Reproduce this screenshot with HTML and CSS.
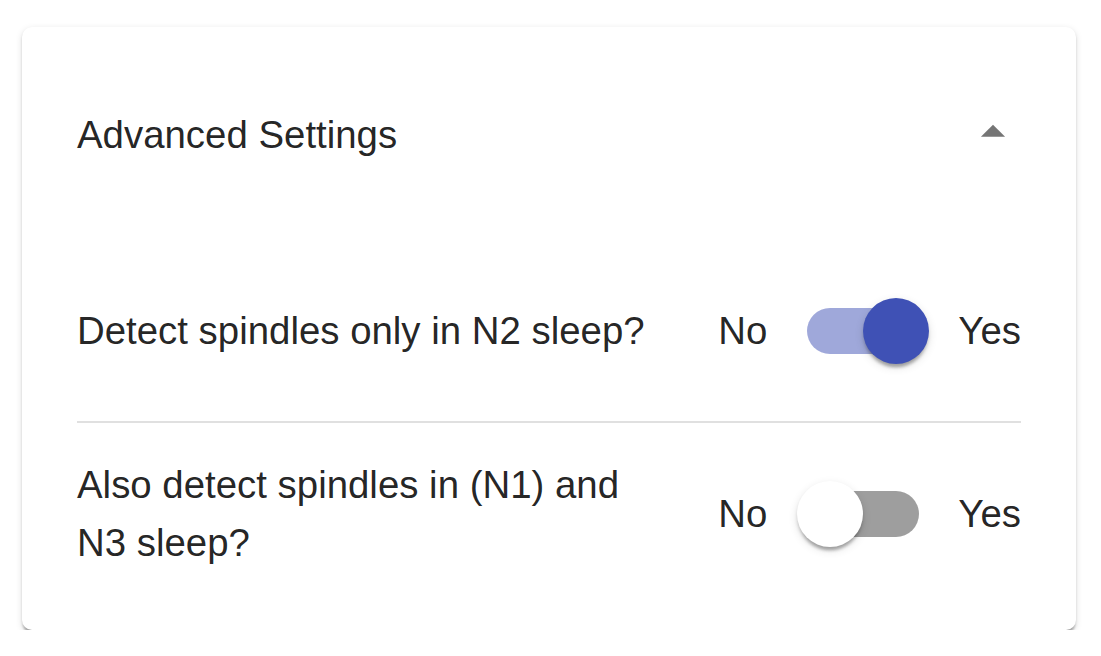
FILE: index.html
```html
<!DOCTYPE html>
<html lang="en">
<head>
    <meta charset="UTF-8">
    <meta name="viewport" content="width=device-width, initial-scale=1.0">
    <title>Advanced Settings</title>
    <link rel="stylesheet" href="styles.css">
</head>
<body>
    <div class="card">
        <div class="summary">
            <span class="summary-title">Advanced Settings</span>
            <svg class="expand-icon" viewBox="0 0 24 24" width="58" height="58">
                <path d="M7 14l5-5 5 5z"></path>
            </svg>
        </div>

        <div class="details">
            <div class="setting-row">
                <div class="setting-label">Detect spindles only in N2 sleep?</div>
                <div class="switch-group">
                    <span class="switch-text">No</span>
                    <span class="switch checked">
                        <span class="track"></span>
                        <span class="thumb"></span>
                    </span>
                    <span class="switch-text">Yes</span>
                </div>
            </div>

            <hr class="divider">

            <div class="setting-row">
                <div class="setting-label">Also detect spindles in (N1) and N3 sleep?</div>
                <div class="switch-group">
                    <span class="switch-text">No</span>
                    <span class="switch">
                        <span class="track"></span>
                        <span class="thumb"></span>
                    </span>
                    <span class="switch-text">Yes</span>
                </div>
            </div>
        </div>
    </div>
</body>
</html>
```

FILE: styles.css
```css
body {
    margin: 0;
    background: #fff;
    font-family: "Liberation Sans", Arial, sans-serif;
    font-size: 38.4px;
    line-height: 1.5;
    color: rgba(0, 0, 0, 0.87);
}
.card {
    margin: 27px 0 0 22px;
    width: 1054px;
    height: 603px;
    box-sizing: border-box;
    padding: 0 55px;
    background: #fff;
    border-radius: 10px;
    box-shadow: 0 4.8px 2.4px -2.4px rgba(0, 0, 0, 0.2),
                0 2.4px 2.4px 0 rgba(0, 0, 0, 0.14),
                0 2.4px 7.2px 0 rgba(0, 0, 0, 0.12);
}
.summary {
    height: 216px;
    display: flex;
    align-items: center;
    justify-content: space-between;
}
.expand-icon {
    fill: rgba(0, 0, 0, 0.54);
    margin: -6px -1px 0 0;
}
.details {
    padding-top: 25px;
}
.setting-row {
    height: 125px;
    display: flex;
    align-items: center;
    justify-content: space-between;
}
.setting-label {
    width: 590px;
}
.switch-group {
    display: flex;
    align-items: center;
}
.divider {
    margin: 28px 0;
    border: none;
    height: 2px;
    background: #e0e0e0;
}
.switch {
    position: relative;
    display: block;
    width: 191px;
    height: 125px;
    box-sizing: border-box;
    padding: 39.6px;
}
.track {
    display: block;
    width: 112px;
    height: 46px;
    border-radius: 23px;
    background: #000;
    opacity: 0.38;
}
.thumb {
    position: absolute;
    top: 29.7px;
    left: 29.7px;
    width: 66px;
    height: 66px;
    border-radius: 50%;
    background: #fff;
    box-shadow: 0 6.6px 3.3px -3.3px rgba(0, 0, 0, 0.2),
                0 3.3px 3.3px 0 rgba(0, 0, 0, 0.14),
                0 3.3px 9.9px 0 rgba(0, 0, 0, 0.12);
}
.switch.checked .track {
    background: #3f51b5;
    opacity: 0.5;
}
.switch.checked .thumb {
    left: 95.7px;
    background: #3f51b5;
}
```
